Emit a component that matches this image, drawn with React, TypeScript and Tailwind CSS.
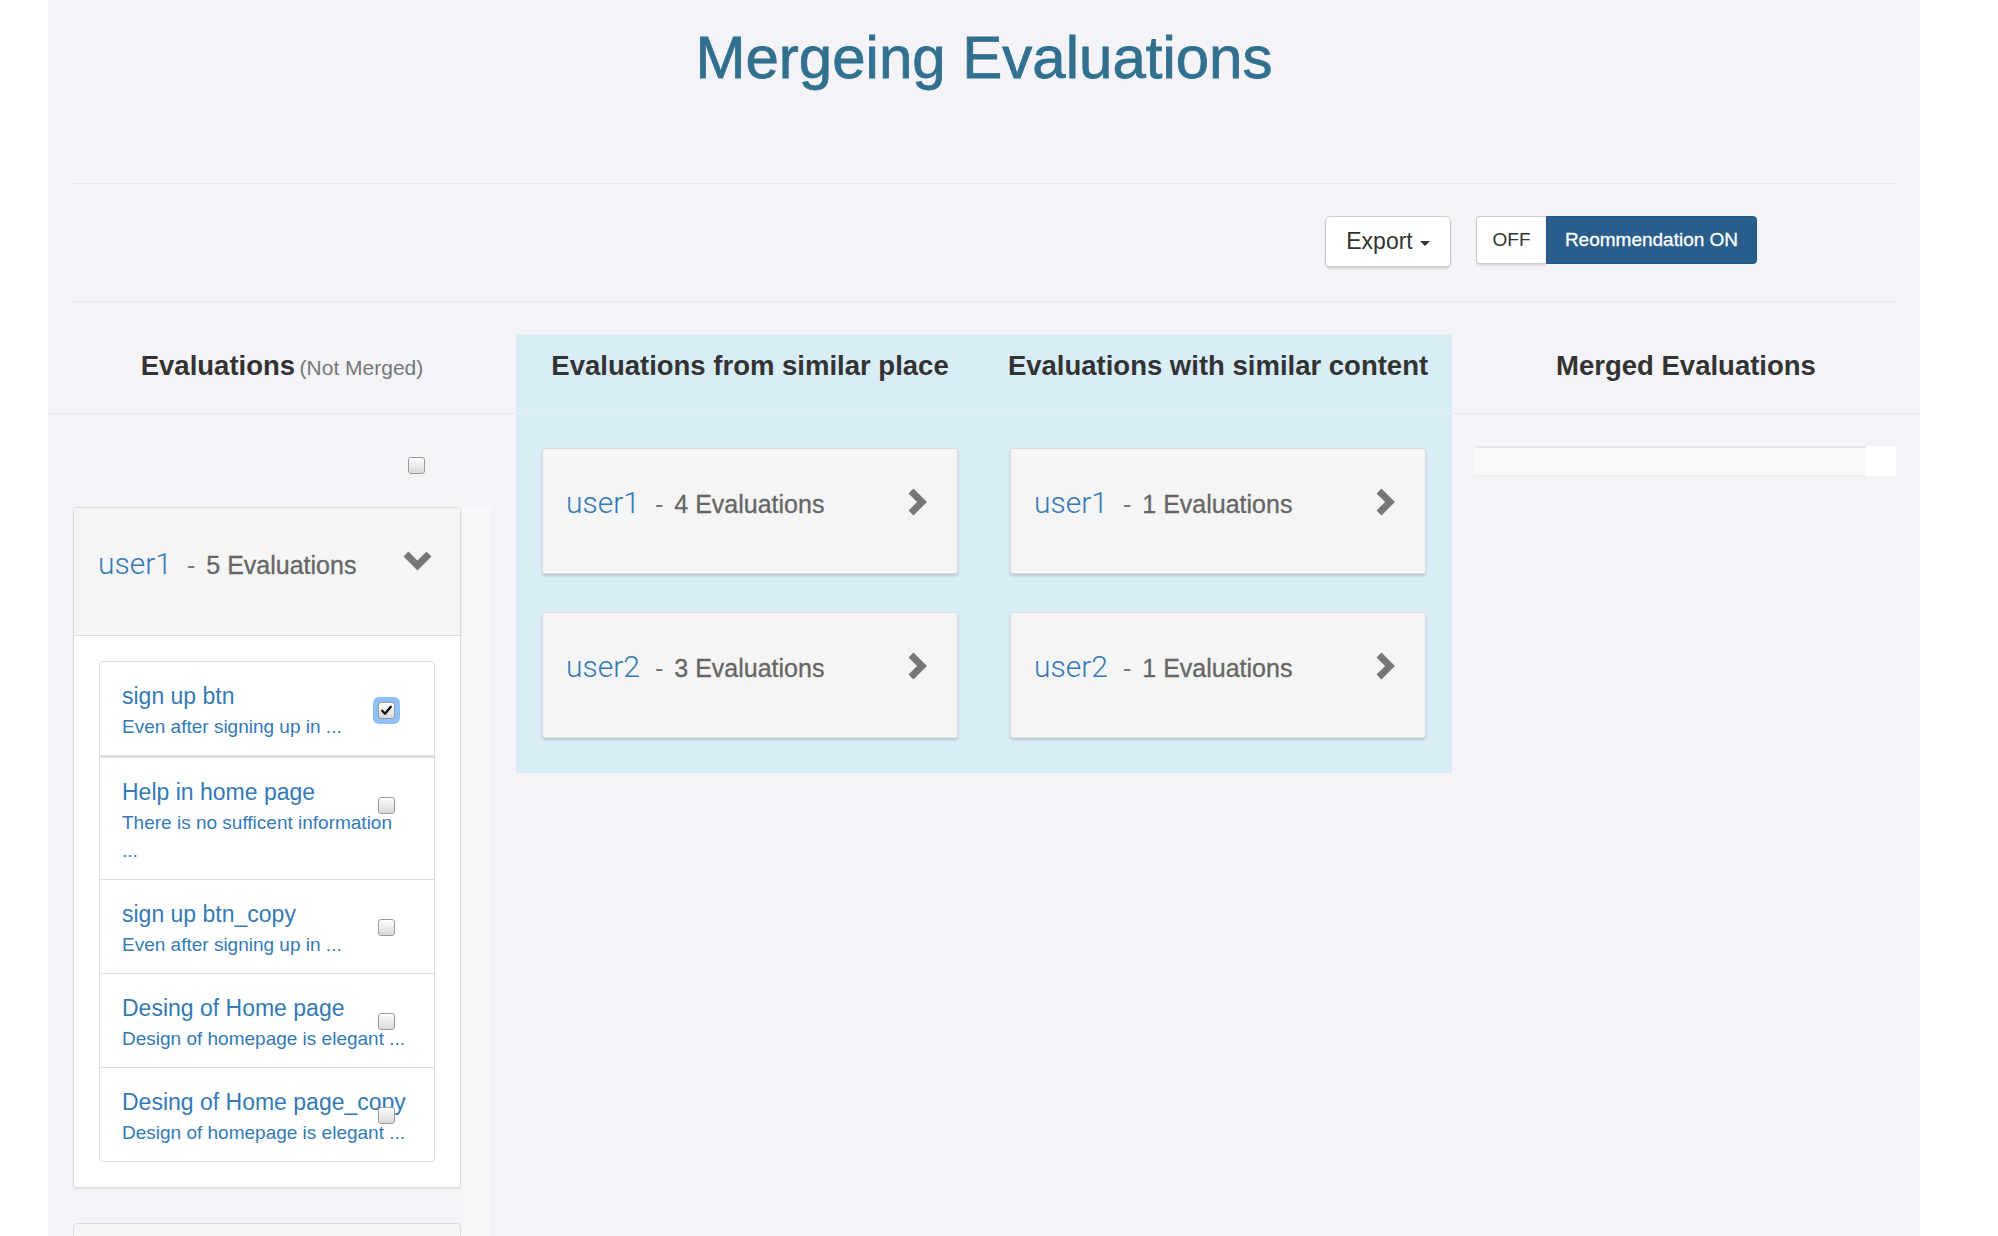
import React from "react";

function ChevronRight() {
  return (
    <svg width="22" height="30" viewBox="0 0 22 30" className="shrink-0">
      <polyline points="4,4 15,15 4,26" fill="none" stroke="#777777" strokeWidth="7" strokeLinejoin="miter" strokeMiterlimit="4" />
    </svg>
  );
}

function ChevronDown() {
  return (
    <svg width="31" height="21" viewBox="0 0 31 21" className="shrink-0">
      <polyline points="4,4 15.5,15.5 27,4" fill="none" stroke="#777777" strokeWidth="7" strokeLinejoin="miter" strokeMiterlimit="4" />
    </svg>
  );
}

function Check({ checked = false }: { checked?: boolean }) {
  const box = (
    <span className="flex h-[17px] w-[17px] items-center justify-center rounded-[3px] border border-[#9b9b9b] bg-gradient-to-b from-[#fdfdfd] to-[#d9d9d9] shadow-[inset_0_1px_0_rgba(255,255,255,0.8)]">
      {checked ? (
        <svg width="13" height="13" viewBox="0 0 13 13">
          <path d="M2.2 6.8 L5 9.8 L10.8 2.8" fill="none" stroke="#111111" strokeWidth="2.3" strokeLinecap="round" strokeLinejoin="round" />
        </svg>
      ) : null}
    </span>
  );
  if (checked) {
    return <span className="flex rounded-[6px] bg-[#8fc0fa] p-[5px]">{box}</span>;
  }
  return box;
}

function UserLine({ user, count }: { user: string; count: string }) {
  return (
    <div className="flex items-baseline">
      <span className="font-['Roboto',sans-serif] text-[30px] font-light leading-[36px] text-[#337ab7]">{user}</span>
      <span className="ml-[15px] text-[25px] leading-[36px] text-[#777777]">-</span>
      <span className="ml-[11px] text-[25px] leading-[36px] text-[#666666] [-webkit-text-stroke:0.3px_#666666]">{count}</span>
    </div>
  );
}

function Card({ user, count }: { user: string; count: string }) {
  return (
    <div className="flex h-[126px] items-start justify-between rounded-[3px] border border-[#dddddd] bg-[#f5f5f5] pl-[23px] pr-[28px] pt-[36px] shadow-[0_2px_3px_rgba(0,0,0,0.16)]">
      <UserLine user={user} count={count} />
      <div className="mt-[2px]">
        <ChevronRight />
      </div>
    </div>
  );
}

type Item = { title: string; lines: string[]; checked?: boolean };

const items: Item[] = [
  { title: "sign up btn", lines: ["Even after signing up in ..."], checked: true },
  { title: "Help in home page", lines: ["There is no sufficent information", "..."] },
  { title: "sign up btn_copy", lines: ["Even after signing up in ..."] },
  { title: "Desing of Home page", lines: ["Design of homepage is elegant ..."] },
  { title: "Desing of Home page_copy", lines: ["Design of homepage is elegant ..."] },
];

function ListItem({ item, index }: { item: Item; index: number }) {
  const border =
    index === 0
      ? "border-b-[3px] border-[#dedede]"
      : index === items.length - 1
      ? ""
      : "border-b border-[#dddddd]";
  return (
    <div className={`relative pl-[22px] pr-[20px] pt-[18px] pb-[14px] ${border}`}>
      <div className="whitespace-nowrap text-[23px] leading-[33px] text-[#337ab7]">{item.title}</div>
      {item.lines.map((l, i) => (
        <div key={i} className="whitespace-nowrap text-[19px] leading-[28px] text-[#337ab7]">
          {l}
        </div>
      ))}
      <div className={`absolute ${item.checked ? "right-[34px] top-[35px]" : "right-[39px] top-[39px]"}`}>
        <Check checked={item.checked} />
      </div>
    </div>
  );
}

export default function App() {
  return (
    <div className="h-screen w-full overflow-hidden bg-white font-['Liberation_Sans',Arial,Helvetica,sans-serif] text-[#333333]">
      <div className="ml-[48px] h-full w-[1872px] bg-[#f4f4f8]">
        <div className="px-[24px]">
          <div className="h-[184px] border-b border-[#e8e8ec] pt-[25px] text-center">
            <h1 className="text-[60px] leading-[66px] text-[#31708f] [-webkit-text-stroke:0.8px_#31708f]">Mergeing Evaluations</h1>
          </div>
          <div className="flex h-[118px] items-start justify-end border-b border-[#e8e8ec] pr-[139px] pt-[32px]">
            <button className="flex h-[51px] w-[126px] items-center justify-center gap-[7px] rounded-[5px] border border-[#cccccc] bg-white text-[23px] text-[#333333] shadow-[0_2px_2px_rgba(0,0,0,0.13)]">
              <span>Export</span>
              <span className="mt-[3px] inline-block h-0 w-0 border-x-[5px] border-t-[5px] border-x-transparent border-t-[#333333]" />
            </button>
            <div className="ml-[25px] flex h-[48px]">
              <button className="flex w-[70px] items-center justify-center rounded-l-[4px] border border-r-0 border-[#cccccc] bg-white text-[19px] text-[#333333] shadow-[0_2px_2px_rgba(0,0,0,0.1)]">
                OFF
              </button>
              <button className="flex w-[211px] items-center justify-center rounded-r-[4px] border border-[#245480] bg-[#295d8c] text-[19px] text-white [-webkit-text-stroke:0.3px_#ffffff]">
                Reommendation ON
              </button>
            </div>
          </div>
        </div>

        <div className="mt-[32px] grid grid-cols-4">
          <div className="h-[80px] border-b border-[#e8e8ec] pt-[12px] text-center leading-[40px]">
            <span className="text-[27.5px] font-bold text-[#333333]">Evaluations</span>{" "}
            <span className="text-[21px] text-[#777777]">(Not Merged)</span>
          </div>
          <div className="h-[80px] border-b border-[#e4eff6] bg-[#d9edf7] pt-[12px] text-center text-[27.5px] font-bold leading-[40px] text-[#333333]">
            Evaluations from similar place
          </div>
          <div className="h-[80px] border-b border-[#e4eff6] bg-[#d9edf7] pt-[12px] text-center text-[27.5px] font-bold leading-[40px] text-[#333333]">
            Evaluations with similar content
          </div>
          <div className="h-[80px] border-b border-[#e8e8ec] pt-[12px] text-center text-[27.5px] font-bold leading-[40px] text-[#333333]">
            Merged Evaluations
          </div>
        </div>

        <div className="grid grid-cols-4 items-start">
          <div className="pt-[43px]">
            <div className="flex justify-end pr-[91px]">
              <Check />
            </div>
            <div className="mt-[33px] flex pl-[25px]">
              <div className="w-[388px] shrink-0">
                <div className="overflow-hidden rounded-[4px] border border-[#dcdcdc] bg-white shadow-[0_1px_2px_rgba(0,0,0,0.08)]">
                  <div className="flex h-[128px] items-start justify-between border-b border-[#dddddd] bg-[#f5f5f5] pl-[24px] pr-[27px] pt-[38px]">
                    <UserLine user="user1" count="5 Evaluations" />
                    <div className="mt-[4px]">
                      <ChevronDown />
                    </div>
                  </div>
                  <div className="p-[25px]">
                    <div className="overflow-hidden rounded-[4px] border border-[#dddddd] bg-white">
                      {items.map((it, i) => (
                        <ListItem key={i} item={it} index={i} />
                      ))}
                    </div>
                  </div>
                </div>
                <div className="mt-[35px] h-[128px] rounded-[4px] border border-[#dcdcdc] bg-[#f5f5f5]" />
              </div>
              <div className="ml-[2px] h-[800px] w-[27px] shrink-0 bg-[#f8f8fa]" />
            </div>
          </div>

          <div className="col-span-2 grid grid-cols-2 bg-[#d9edf7]">
            <div className="flex flex-col gap-[38px] px-[26px] pb-[35px] pt-[34px]">
              <Card user="user1" count="4 Evaluations" />
              <Card user="user2" count="3 Evaluations" />
            </div>
            <div className="flex flex-col gap-[38px] px-[26px] pb-[35px] pt-[34px]">
              <Card user="user1" count="1 Evaluations" />
              <Card user="user2" count="1 Evaluations" />
            </div>
          </div>

          <div className="flex pl-[23px] pr-[24px] pt-[32px]">
            <div className="h-[30px] flex-1 border-t-[2px] border-b border-t-[#e6e6e6] border-b-[#eeeeee] bg-[#f9f9f9]" />
            <div className="h-[30px] w-[30px] bg-white" />
          </div>
        </div>
      </div>
    </div>
  );
}
